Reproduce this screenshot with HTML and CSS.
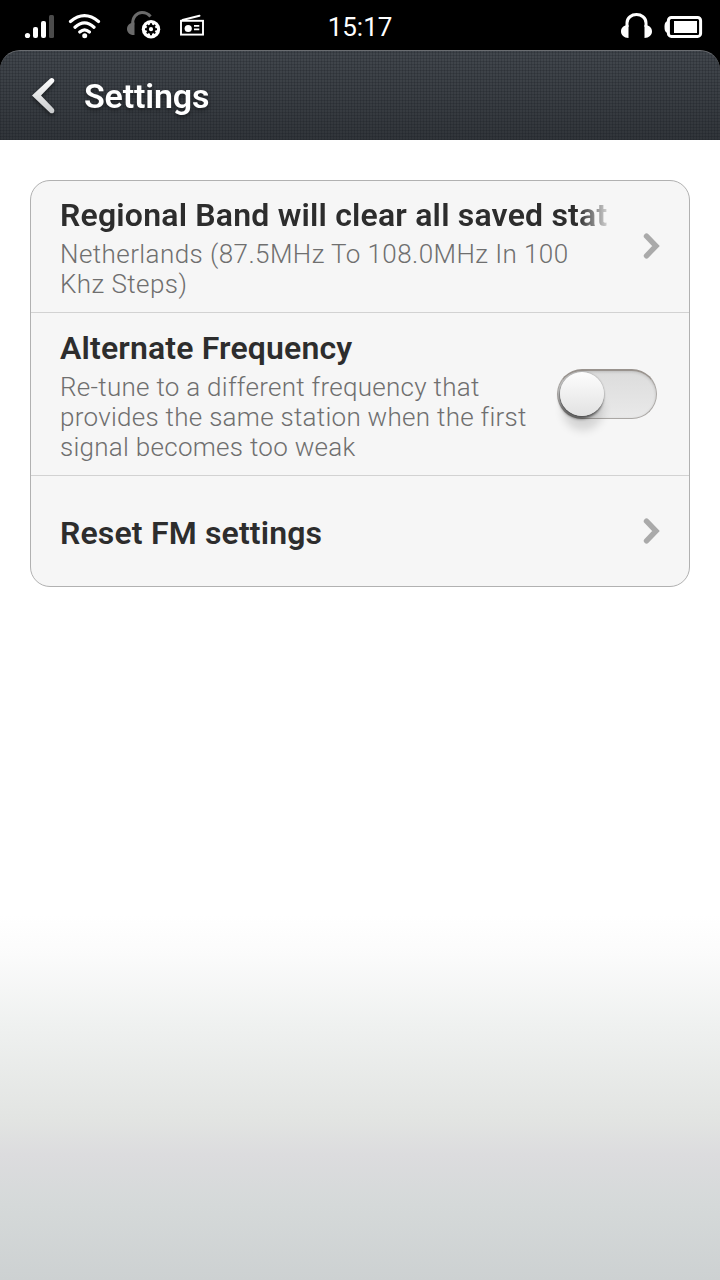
FILE: index.html
```html
<!DOCTYPE html>
<html lang="en">
<head>
<meta charset="utf-8">
<title>Settings</title>
<link rel="stylesheet" href="styles.css">
</head>
<body>
<div class="top">
<div class="status">
  <div class="status-left">
    <svg width="32" height="30" viewBox="24 12 32 30" fill="#fff"><circle cx="27.5" cy="35.5" r="2.6"/><rect x="33" y="27" width="5" height="11" rx="2"/><rect x="41" y="21" width="5" height="17" rx="2"/><rect x="49" y="15" width="5" height="23" rx="1.5" fill="#4b4b4b"/></svg>
    <svg class="wifi" width="34" height="30" viewBox="68 12 34 30" fill="none" stroke="#fff" stroke-width="3.2" stroke-linecap="round"><path d="M70.5 21.5Q84.500 9.700 98.500 21.500M75 27.200Q84.500 18.600 94 27.200M79.800 32Q84.600 27.800 89.400 32"/><circle cx="84.700" cy="35.700" r="2.500" fill="#fff" stroke="none"/></svg>
    <svg class="phones-gear" width="36" height="34" viewBox="126 8 36 34"><path d="M132.700 25C132 17 137 12.500 142 12.500C145.500 12.500 148.500 14 150.500 16.500" fill="none" stroke="#6b6b6b" stroke-width="3"/><path d="M134.500 22.500V35C130 35.500 127 32.500 127 29C127 25 130 22.500 134.500 22.500Z" fill="#6b6b6b"/><circle cx="151" cy="29.200" r="9.200" fill="#fff"/><circle cx="151" cy="29.200" r="3.400" fill="none" stroke="#000" stroke-width="2.600"/><path d="M151 23.200v2M151 33.200v2M145 29.200h2M155 29.200h2M146.800 25l1.400 1.400M153.800 32l1.400 1.400M155.200 25l-1.400 1.400M148.200 32l-1.400 1.400" stroke="#000" stroke-width="2"/></svg>
    <svg class="radio" width="26" height="26" viewBox="179 12 26 26"><path d="M182.500 20L199.500 15.800" stroke="#fff" stroke-width="2" stroke-linecap="round"/><rect x="181" y="20.800" width="22" height="13.800" fill="none" stroke="#fff" stroke-width="1.900"/><circle cx="188.200" cy="28.500" r="3.600" fill="#fff"/><path d="M194 25.800h5.300M194 29.300h5.300" fill="none" stroke="#fff" stroke-width="1.700"/></svg>
  </div>
  <time class="clock">15:17</time>
  <div class="status-right">
    <svg width="32" height="30" viewBox="620 10 32 30"><path d="M627 27V23C627 11.800 646 11.800 646 23V27" fill="none" stroke="#fff" stroke-width="3"/><path d="M628.500 25V38C624 38 621 35 621 31.500C621 27.500 624 25 628.500 25ZM644.500 25V38C649 38 652 35 652 31.500C652 27.500 649 25 644.500 25Z" fill="#fff"/></svg>
    <svg width="39" height="24" viewBox="664 15 39 24"><path d="M668 21C665.500 21.500 664.500 23 664.500 27C664.500 31 665.500 32.500 668 33Z" fill="#fff"/><rect x="668.400" y="17.400" width="32.200" height="19" rx="3" fill="none" stroke="#fff" stroke-width="3"/><rect x="674" y="21" width="23" height="12" fill="#fff"/></svg>
  </div>
</div>
<header class="bar">
  <svg width="26" height="40" viewBox="30 76 26 40"><defs><linearGradient id="back" x1="0" y1="0" x2="0" y2="1"><stop offset="0" stop-color="#fff"/><stop offset="1" stop-color="#c8cacc"/></linearGradient></defs><path d="M50 78.700C52.500 76.500 56 80 53.500 82.500L41 95.500L53.500 108.500C56 111.500 52.500 115 49.800 112.500L32 95.500Z" fill="url(#back)"/></svg>
  <h1 class="bar-title">Settings</h1>
</header>
</div>
<main class="content">
  <section class="card">
    <div class="row band">
      <div class="text">
        <h2 class="title fade">Regional Band will clear all saved stat</h2>
        <p class="summary wide">Netherlands (87.5MHz To 108.0MHz In 100<br>Khz Steps)</p>
      </div>
      <svg class="chevron" width="18" height="26" viewBox="0 0 18 26"><path d="M3.500 3.200L13 13L3.500 22.800" /></svg>
    </div>
    <div class="row alternate">
      <div class="text">
        <h2 class="title">Alternate Frequency</h2>
        <p class="summary">Re-tune to a different frequency that<br>provides the same station when the first<br>signal becomes too weak</p>
      </div>
      <div class="switch"><div class="knob"></div></div>
    </div>
    <div class="row reset">
      <div class="text"><h2 class="title">Reset FM settings</h2></div>
      <svg class="chevron" width="18" height="26" viewBox="0 0 18 26"><path d="M3.500 3.200L13 13L3.500 22.800" /></svg>
    </div>
  </section>
</main>
</body>
</html>
```

FILE: styles.css
```css
* { box-sizing: border-box; }
body {
  margin: 0;
  width: 720px;
  height: 1280px;
  overflow: hidden;
  font-family: Roboto, sans-serif;
  background: linear-gradient(#fff 0, #fff 915px, #fbfbfb 955px, #eff1f0 1025px, #e2e4e2 1120px, #dcdcde 1155px, #d5d9d9 1205px, #cdd1d2 1280px);
}
svg { display: block; flex: none; }
h1, h2, p { margin: 0; white-space: nowrap; }
.top { background: #000; }
.status {
  display: grid;
  grid-template-columns: 1fr auto 1fr;
  height: 50px;
  padding: 0 17px 0 24px;
  color: #fff;
}
.status-left { display: flex; align-items: flex-start; padding-top: 12px; }
.wifi { margin-left: 12px; }
.phones-gear { margin: -4px 0 0 24px; }
.radio { margin-left: 17px; }
.clock { font-size: 26px; line-height: 32px; padding-top: 11px; margin-left: -7px; }
.status-right { display: flex; justify-content: flex-end; align-items: flex-start; gap: 12px; padding-top: 10px; }
.status-right svg:last-child { margin-top: 5px; }
.bar {
  display: flex;
  align-items: center;
  height: 90px;
  padding: 0 30px;
  gap: 28px;
  border-top: 1px solid #6a6d71;
  border-radius: 20px 20px 0 0;
  background:
    repeating-linear-gradient(90deg, rgba(20, 24, 30, .22) 0 1px, transparent 1px 3px),
    repeating-linear-gradient(0deg, rgba(20, 24, 30, .22) 0 1px, transparent 1px 3px),
    linear-gradient(#42474d, #31353a);
}
.bar svg, .bar-title { filter: drop-shadow(0 2px 2px rgba(0, 0, 0, .5)); }
.bar-title { color: #fff; font-size: 34px; line-height: 40px; font-weight: 600; letter-spacing: -.15px; }
.content { padding: 40px 30px; }
.card { border: 1px solid #b1b1b1; border-radius: 20px; background: #f6f6f6; overflow: hidden; }
.row { display: flex; padding-left: 29px; justify-content: space-between; }
.row + .row { border-top: 1px solid #d2d2d2; }
.band { height: 131px; padding-top: 15px; padding-right: 28px; }
.alternate { height: 163px; padding-top: 16px; padding-right: 32px; }
.reset { height: 111px; align-items: center; padding-right: 28px; }
.reset .text { padding-top: 4px; }
.title { color: #2d2d2d; font-size: 32px; line-height: 38px; font-weight: 600; letter-spacing: .16px; }
.fade {
  width: 552px;
  letter-spacing: .2px;
  -webkit-mask-image: linear-gradient(90deg, #000 518px, transparent 554px);
  mask-image: linear-gradient(90deg, #000 518px, transparent 554px);
}
.summary { margin-top: 5px; color: #6f6f6f; font-size: 26px; line-height: 30px; font-weight: 300; letter-spacing: .28px; }
.wide { letter-spacing: .43px; }
.chevron { fill: none; stroke: #aaa; stroke-width: 5.4; stroke-linecap: round; }
.band .chevron { margin-top: 37px; }
.switch {
  position: relative;
  flex: none;
  width: 100px;
  height: 50px;
  margin-top: 40px;
  border: 1px solid #aaa7a4;
  border-top: 2px solid #99938e;
  border-radius: 25px;
  background: linear-gradient(#dcdcdc, #e9e9e9);
  box-shadow: inset 0 1px 3px rgba(0, 0, 0, .15);
}
.knob {
  position: absolute;
  left: 2px;
  top: 1px;
  width: 44px;
  height: 44px;
  border-radius: 50%;
  background: linear-gradient(#fdfdfd, #e2e2e2);
  box-shadow: 0 0 2px rgba(0, 0, 0, .35), -1px 3px 3px rgba(0, 0, 0, .55), 1px 16px 10px -2px rgba(0, 0, 0, .14);
}
```
